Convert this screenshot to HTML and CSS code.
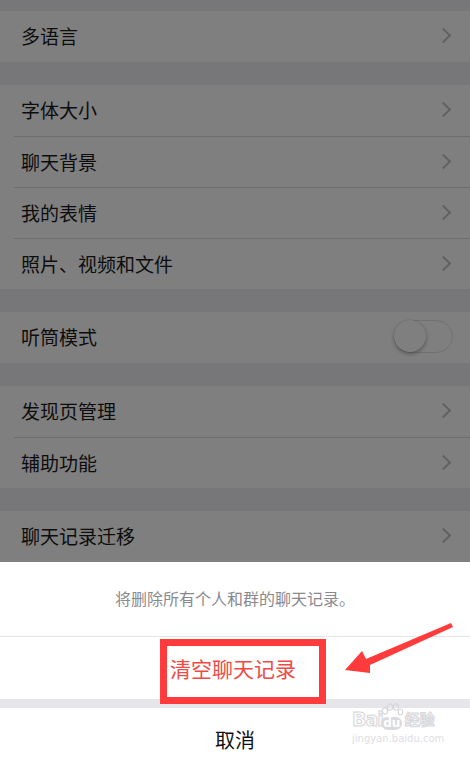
FILE: index.html
```html
<!DOCTYPE html>
<html lang="zh-CN">
<head>
<meta charset="UTF-8">
<meta name="viewport" content="width=device-width, initial-scale=1.0">
<title>通用</title>
<link rel="stylesheet" href="styles.css">
</head>
<body>
  <div class="screen">
    <div class="settings">
      <div class="gap gap-top"></div>
      <div class="group">
        <div class="row"><span>多语言</span><i class="chevron"></i></div>
      </div>
      <div class="gap"></div>
      <div class="group">
        <div class="row"><span>字体大小</span><i class="chevron"></i></div>
        <div class="row"><span>聊天背景</span><i class="chevron"></i></div>
        <div class="row"><span>我的表情</span><i class="chevron"></i></div>
        <div class="row"><span>照片、视频和文件</span><i class="chevron"></i></div>
      </div>
      <div class="gap"></div>
      <div class="group">
        <div class="row"><span>听筒模式</span><span class="switch"><span class="knob"></span></span></div>
      </div>
      <div class="gap"></div>
      <div class="group">
        <div class="row"><span>发现页管理</span><i class="chevron"></i></div>
        <div class="row"><span>辅助功能</span><i class="chevron"></i></div>
      </div>
      <div class="gap"></div>
      <div class="group">
        <div class="row"><span>聊天记录迁移</span><i class="chevron"></i></div>
      </div>
    </div>

    <!-- dim layer behind the action sheet -->
    <div class="mask"></div>

    <div class="sheet">
      <div class="sheet-msg">将删除所有个人和群的聊天记录。</div>
      <div class="sheet-btn danger">清空聊天记录</div>
      <div class="sheet-sep"></div>
      <div class="sheet-btn cancel">取消</div>
    </div>

    <!-- annotation -->
    <div class="mark-box"></div>
    <svg class="mark-arrow" width="470" height="757" viewBox="0 0 470 757">
      <polygon points="345,670 362,651 366,659 451,623 453,627 370,665 370,673" fill="#ff3b3b"/>
    </svg>

    <div class="watermark">
      <div class="wm-top">
        <span class="wm-bai">Bai</span>
        <span class="wm-paw">
          <svg width="22" height="14" viewBox="0 0 22 14">
            <ellipse cx="4" cy="8" rx="2.6" ry="3.2" fill="none" stroke="#d8d8dc" stroke-width="1.2"/>
            <ellipse cx="9" cy="4" rx="2.6" ry="3.2" fill="none" stroke="#d8d8dc" stroke-width="1.2"/>
            <ellipse cx="15" cy="4" rx="2.6" ry="3.2" fill="none" stroke="#d8d8dc" stroke-width="1.2"/>
            <ellipse cx="19.5" cy="9" rx="2.2" ry="3" fill="none" stroke="#d8d8dc" stroke-width="1.2"/>
          </svg>
          <span class="wm-du">du</span>
        </span>
        <span class="wm-jy">经验</span>
      </div>
      <div class="wm-url">jingyan.baidu.com</div>
    </div>
  </div>
</body>
</html>
```

FILE: styles.css
```css
body {
  margin: 0;
  font-family: "Noto Sans CJK SC", "Noto Sans", sans-serif;
  background-color: #efeff4;
}

.screen {
  position: relative;
  width: 470px;
  height: 757px;
  overflow: hidden;
}

.gap {
  height: 23px;
  background-color: #efeff4;
}

.gap-top {
  height: 11px;
}

.group {
  background-color: #fff;
}

.row {
  height: 51px;
  margin-left: 14px;
  padding: 0 18px 2px 7px;
  display: flex;
  align-items: center;
  justify-content: space-between;
  border-top: 1px solid #dcdce0;
  box-sizing: border-box;
  font-size: 19px;
  color: #1a1a1a;
}

.group .row:first-child {
  border-top: none;
}

.chevron {
  width: 9px;
  height: 9px;
  border-top: 2px solid #c4c4c8;
  border-right: 2px solid #c4c4c8;
  transform: rotate(45deg);
  margin-right: 3px;
}

.switch {
  width: 59px;
  height: 33px;
  border-radius: 17px;
  border: 1.5px solid #e2e2e6;
  box-sizing: border-box;
  margin-right: -1px;
  position: relative;
}

.knob {
  position: absolute;
  left: -1px;
  top: -1px;
  width: 32px;
  height: 32px;
  border-radius: 50%;
  background-color: #fff;
  box-shadow: 0 2px 4px rgba(0, 0, 0, 0.3), 0 0 0 0.5px rgba(0, 0, 0, 0.08);
}

.mask {
  position: absolute;
  inset: 0;
  background-color: rgba(0, 0, 0, 0.5);
}

.sheet {
  position: absolute;
  left: 0;
  right: 0;
  top: 562px;
  background-color: #fff;
}

.sheet-msg {
  height: 75px;
  display: flex;
  align-items: center;
  justify-content: center;
  font-size: 16px;
  color: #8a8a8e;
  border-bottom: 1px solid #e5e5e8;
  box-sizing: border-box;
  padding-bottom: 2px;
}

.sheet-btn {
  display: flex;
  align-items: center;
  justify-content: center;
  font-size: 21px;
}

.danger {
  height: 62px;
  color: #ee4b48;
  padding-right: 4px;
}

.sheet-sep {
  height: 9px;
  background-color: #e6e6ea;
}

.cancel {
  height: 60px;
  color: #111;
  font-size: 20px;
  padding-top: 2px;
  box-sizing: border-box;
}

.mark-box {
  position: absolute;
  left: 160px;
  top: 639px;
  width: 166px;
  height: 65px;
  border: 7px solid #ff3b3b;
  box-sizing: border-box;
}

.mark-arrow {
  position: absolute;
  left: 0;
  top: 0;
}

.watermark {
  position: absolute;
  left: 352px;
  top: 702px;
  width: 92px;
  color: #fff;
  font-family: "DejaVu Sans", sans-serif;
}

.wm-top {
  display: flex;
  align-items: flex-end;
  height: 28px;
}

.wm-bai {
  font-size: 19px;
  font-weight: bold;
  line-height: 22px;
  -webkit-text-stroke: 1px #d8d8dc;
  color: #fafafa;
  letter-spacing: -1px;
}

.wm-paw {
  display: flex;
  flex-direction: column;
  align-items: center;
  width: 22px;
  margin-left: -2px;
}

.wm-du {
  font-size: 12px;
  font-weight: bold;
  line-height: 13px;
  color: #fff;
  background-color: #dadade;
  border-radius: 6px 6px 7px 7px;
  padding: 0 2px;
}

.wm-jy {
  font-family: "Noto Sans CJK SC", sans-serif;
  font-size: 15px;
  font-weight: bold;
  line-height: 22px;
  -webkit-text-stroke: 1px #d8d8dc;
  color: #fafafa;
  margin-left: 2px;
}

.wm-url {
  font-size: 10px;
  line-height: 14px;
  color: #dedee2;
  margin-top: 2px;
}
```
